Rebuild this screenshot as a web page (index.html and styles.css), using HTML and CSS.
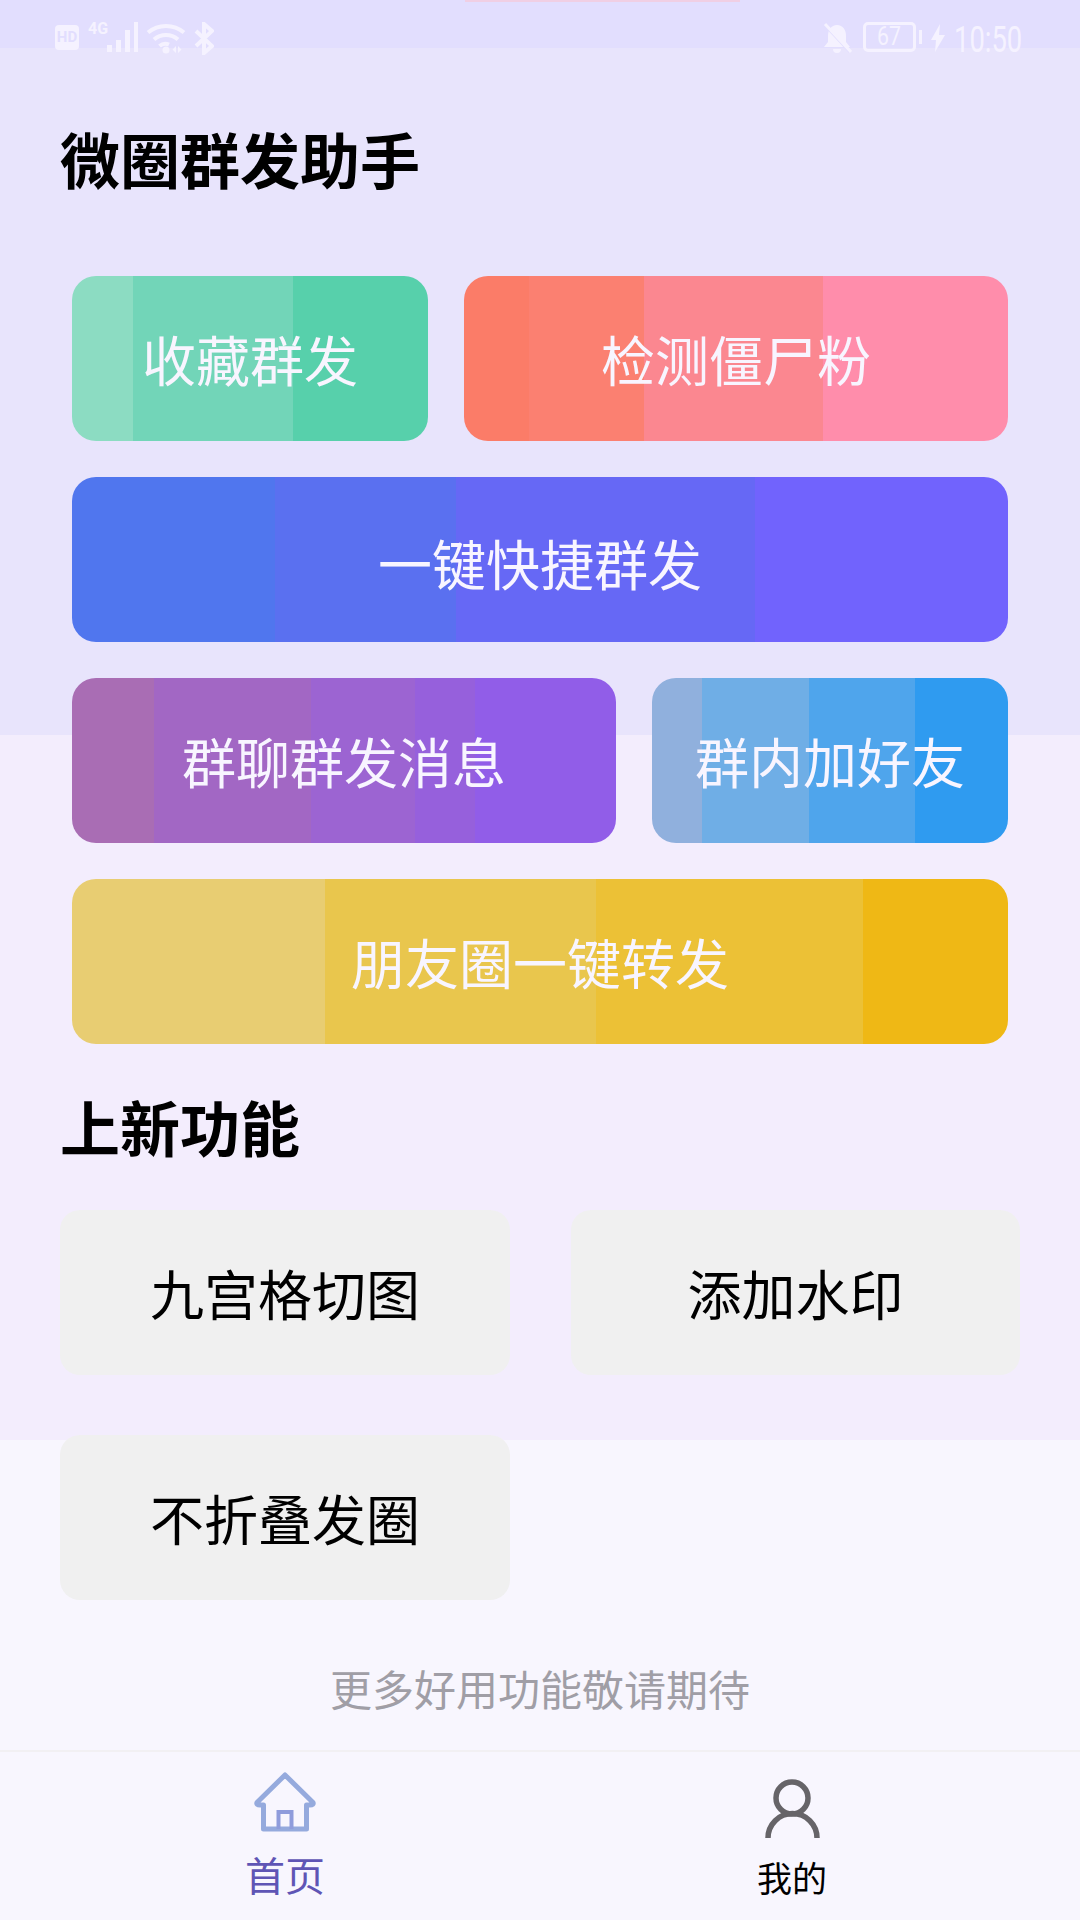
FILE: index.html
```html
<!DOCTYPE html>
<html lang="zh-CN">
<head>
<meta charset="utf-8">
<title>微圈群发助手</title>
<link rel="stylesheet" href="styles.css">
</head>
<body>
<div class="page">
  <div class="top-line"></div>
  <header class="status">
    <div class="status-group">
      <span class="hd">HD</span>
      <span class="net">4G</span>
      <svg class="ic-signal" viewBox="0 0 31 30" aria-hidden="true"><rect x="0" y="23" width="5" height="7"/><rect x="9" y="18" width="5" height="12"/><rect x="18" y="8" width="5" height="22"/><rect x="27" y="0" width="4" height="30"/></svg>
      <svg class="ic-wifi" viewBox="0 0 40 32" aria-hidden="true"><path class="line" d="M2 10.5A28 28 0 0 1 38 10.5M8 17.5A18 18 0 0 1 32 17.5M13.500 24A9 9 0 0 1 23 22.500"/><circle class="fill" cx="20" cy="28" r="3.500"/><path class="fill" d="M30 24v7l-3.500-3.500zM32 24v7l3.500-3.500z"/></svg>
      <svg class="ic-bt" viewBox="0 0 20 33" aria-hidden="true"><path class="line" d="M2 9L18 24L10 31V2L18 9L2 24"/></svg>
    </div>
    <div class="status-group">
      <svg class="ic-bell" viewBox="0 0 30 32" aria-hidden="true"><path class="fill" d="M15 3c-6 0-9 5-9 11v6l-4 5h26l-4-5v-6c0-6-3-11-9-11zM11 27h8a4 4 0 0 1-8 0z"/><path class="cut" d="M2 2L28 30"/><path class="line thin" d="M3 2L29 30"/></svg>
      <span class="battery"><span class="battery-num">67</span></span>
      <span class="battery-nub"></span>
      <svg class="ic-bolt" viewBox="0 0 14 28" aria-hidden="true"><path class="fill" d="M9 0L0 16h5L4 28l10-17H8z"/></svg>
      <span class="time">10:50</span>
    </div>
  </header>

  <h1 class="heading heading-main">微圈群发助手</h1>
  <section class="actions">
    <div class="action-row">
      <a class="action action-short green">收藏群发</a>
      <a class="action action-grow coral">检测僵尸粉</a>
    </div>
    <a class="action indigo">一键快捷群发</a>
    <div class="action-row">
      <a class="action action-grow violet">群聊群发消息</a>
      <a class="action action-short sky">群内加好友</a>
    </div>
    <a class="action gold">朋友圈一键转发</a>
  </section>

  <h2 class="heading heading-sub">上新功能</h2>
  <section class="features">
    <a class="feature">九宫格切图</a>
    <a class="feature">添加水印</a>
    <a class="feature">不折叠发圈</a>
  </section>

  <p class="more">更多好用功能敬请期待</p>

  <nav class="tabbar">
    <a class="tab tab-home">
      <svg class="tab-icon" viewBox="0 0 64 64" aria-hidden="true"><path class="house" d="M32 4L4 31.500Q3 34 7 34H10.500V58H53.500V34H57Q61 34 60 31.500Z"/><path class="house-door" d="M25.500 58V41H38.500V58"/></svg>
      <span class="tab-label">首页</span>
    </a>
    <a class="tab tab-mine">
      <svg class="tab-icon" viewBox="0 0 64 64" aria-hidden="true"><circle class="person" cx="32" cy="23" r="16"/><path class="person" d="M8 63A24.500 24.500 0 0 1 57 63"/></svg>
      <span class="tab-label">我的</span>
    </a>
  </nav>
</div>
</body>
</html>
```

FILE: styles.css
```css
* { box-sizing: border-box; }

html, body { margin: 0; padding: 0; }

body {
  font-family: "Noto Sans CJK SC", "Noto Sans", sans-serif;
  color: #000;
}

a { display: block; }

.page {
  position: relative;
  width: 1080px;
  height: 1920px;
  display: flex;
  flex-direction: column;
  overflow: hidden;
  background: linear-gradient(to bottom,
    #e2defe 0, #e2defe 48px,
    #e8e4fc 48px, #e8e4fc 735px,
    #f3edfd 735px, #f3edfd 1440px,
    #f8f6fe 1440px, #f8f6fe 100%);
}

.top-line {
  position: absolute;
  top: 0;
  left: 465px;
  width: 275px;
  height: 2px;
  background: #f0cfe4;
}

/* status bar */
.status {
  height: 76px;
  padding: 22px 58px 0 55px;
  display: flex;
  justify-content: space-between;
  align-items: flex-start;
}

.status-group {
  display: flex;
  align-items: flex-start;
}

.status svg { display: block; fill: #f5f2ff; }

.status .line {
  fill: none;
  stroke: #f5f2ff;
  stroke-width: 4;
}

.status .thin { stroke-width: 3; }

.status .fill { fill: #f5f2ff; stroke: none; }

.status .cut {
  fill: none;
  stroke: #e2defe;
  stroke-width: 3;
}

.hd {
  width: 24px;
  height: 25px;
  margin-top: 3px;
  border-radius: 4px;
  background: #f5f2ff;
  color: #e2defe;
  font: 700 15px/25px "Roboto", sans-serif;
  text-align: center;
}

.net {
  width: 18px;
  margin-left: 9px;
  color: #f5f2ff;
  font: 700 16px/14px "Roboto", sans-serif;
}

.ic-signal { width: 31px; height: 30px; margin-left: 1px; }
.ic-wifi { width: 40px; height: 32px; margin-left: 8px; }
.ic-bt { width: 20px; height: 33px; margin-left: 8px; }
.ic-bell { width: 30px; height: 32px; margin-right: 11px; }

.battery {
  width: 53px;
  height: 30px;
  border: 3px solid #f5f2ff;
  border-radius: 5px;
  display: flex;
  justify-content: center;
  color: #f5f2ff;
}

.battery-num {
  font: 400 25px/24px "Roboto", sans-serif;
  transform: scaleX(0.85);
}

.battery-nub {
  width: 3px;
  height: 14px;
  margin: 8px 0 0 3px;
  background: #f5f2ff;
}

.ic-bolt { width: 14px; height: 28px; margin: 2px 0 0 9px; }

.time {
  width: 68px;
  margin-left: 9px;
  color: #f5f2ff;
  font: 400 36px/36px "Roboto", sans-serif;
  transform: scaleX(0.76);
  transform-origin: left top;
  white-space: nowrap;
}

/* headings */
.heading {
  margin: 0;
  padding-left: 60px;
  font-size: 60px;
  font-weight: 700;
  line-height: 84px;
}

.heading-main { margin: 40px 0 76px; }
.heading-sub { margin: 40px 0 42px; }

/* gradient action buttons */
.actions {
  padding: 0 72px;
  display: flex;
  flex-direction: column;
  gap: 36px;
}

.action-row {
  display: flex;
  gap: 36px;
}

.action {
  height: 165px;
  border-radius: 24px;
  color: #f8f5ff;
  font-size: 54px;
  line-height: 165px;
  text-align: center;
}

.action-short { flex: 0 0 356px; }
.action-grow { flex: 1 1 0; }

.green {
  background: linear-gradient(to right,
    #8cdcc2 0 17%, #72d5b8 17% 62%, #57d0ab 62% 100%);
}

.coral {
  background: linear-gradient(to right,
    #fb7c68 0 12%, #fb8071 12% 33%, #fb8790 33% 66%, #ff8dab 66% 100%);
}

.indigo {
  padding-top: 3px;
  background: linear-gradient(to right,
    #5076ee 0 21.7%, #5a70f0 21.7% 41%, #6668f5 41% 73%, #7163fd 73% 100%);
}

.violet {
  background: linear-gradient(to right,
    #a96db4 0 15%, #a267c4 15% 44%, #9c64d2 44% 63%, #9660dc 63% 74%, #915de8 74% 100%);
}

.sky {
  background: linear-gradient(to right,
    #90b0dd 0 14%, #6faee6 14% 44%, #4fa5ec 44% 74%, #2f9bf0 74% 100%);
}

.gold {
  background: linear-gradient(to right,
    #e8cd72 0 27%, #e9c64d 27% 56%, #ecc136 56% 84.5%, #efb815 84.5% 100%);
}

/* grey feature cards */
.features {
  padding: 0 60px;
  display: grid;
  grid-template-columns: 450px 449px;
  justify-content: space-between;
  row-gap: 60px;
}

.feature {
  height: 165px;
  border-radius: 20px;
  background: #f0f0f0;
  font-size: 54px;
  line-height: 165px;
  text-align: center;
}

.more {
  margin: 58px 0 0;
  color: #a09ea6;
  font-size: 42px;
  line-height: 60px;
  text-align: center;
}

/* bottom tabs */
.tabbar {
  margin-top: auto;
  height: 170px;
  padding: 0 188px 0 185px;
  border-top: 2px solid #f2f0f3;
  display: flex;
  justify-content: space-between;
}

.tab {
  width: 200px;
  display: flex;
  flex-direction: column;
  align-items: center;
}

.tab-icon { display: block; width: 64px; height: 64px; }

.house {
  fill: none;
  stroke: #95aadd;
  stroke-width: 5;
  stroke-linejoin: round;
}

.house-door {
  fill: none;
  stroke: #8f9cdc;
  stroke-width: 4;
}

.person {
  fill: none;
  stroke: #666468;
  stroke-width: 5.5;
}

.tab-label { line-height: 50px; }

.tab-home { padding-top: 19px; }
.tab-home .tab-label { margin-top: 14px; font-size: 40px; color: #5f55b5; }

.tab-mine { padding-top: 23px; }
.tab-mine .tab-label { margin-top: 13px; font-size: 35px; color: #000; }
```
